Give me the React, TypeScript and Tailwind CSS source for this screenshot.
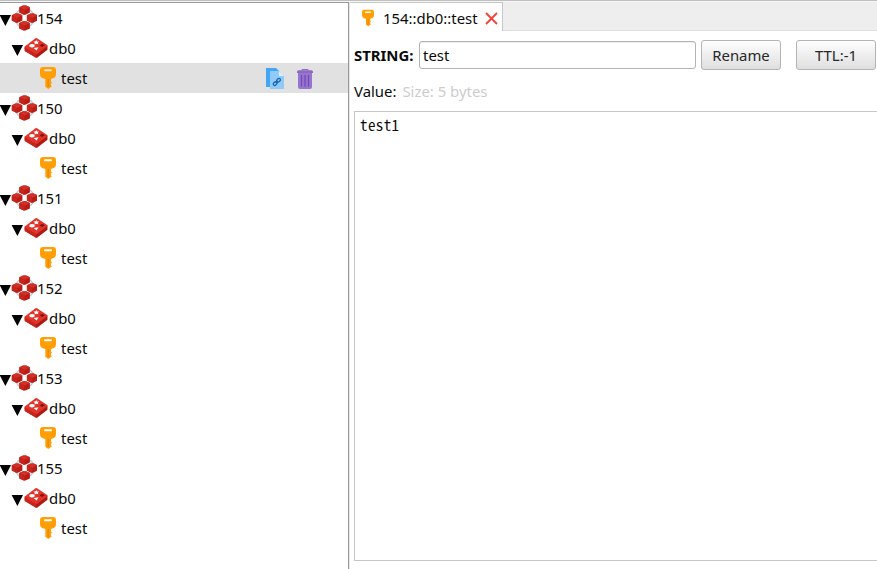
function Cube({ x, y }: { x: number; y: number }) {
  return (
    <g transform={`translate(${x} ${y})`}>
      <path d="M-1.5 -4.6H1.5L5.3 -2.8V2.5L.8 4.7H-.8L-5.3 2.5V-2.8Z" fill="#b81c14" />
      <path d="M-1.5 -4.6H1.5L5.3 -2.8L0 -.1L-5.3 -2.8Z" fill="#cf3027" />
      <path d="M-5.3 -2.8L0 -.1V4.7H-.8L-5.3 2.5Z" fill="#c6241c" />
    </g>
  );
}

function ClusterIcon() {
  return (
    <svg className="h-[26px] w-[26px] shrink-0" viewBox="0 0 26 26">
      <circle cx="13.6" cy="13" r="9.6" fill="none" stroke="#bcc6cc" strokeWidth="1.3" />
      <Cube x={13.6} y={5.1} />
      <Cube x={6.1} y={13} />
      <Cube x={21.2} y={13} />
      <Cube x={13.6} y={20.9} />
    </svg>
  );
}

function DatabaseIcon() {
  return (
    <svg className="h-[24px] w-[24px] shrink-0" viewBox="0 0 24 24">
      <path d="M.8 10.5Q.4 11.5 .8 15L12 21.8Q12.8 22 13.4 21.5L23.5 13.7V9.8Z" fill="#ad1a12" />
      <path d="M.8 10.6L11.5 2.2Q12.2 1.8 13 2.2L23.2 9.1Q23.9 9.6 23.2 10.2L13 18Q12.3 18.4 11.5 18L.8 11.6Q.2 11.1 .8 10.6Z" fill="#e0332a" />
      <path d="M.6 11.4L12.2 18.3V21.8L.8 15Z" fill="#c9251c" />
      <path d="M12.3 4L13.1 5.4L15.1 5.5L13.9 6.8L14.3 8.3L12.3 7.7L10.5 8.4L10.8 6.8L9.4 5.6L11.4 5.4Z" fill="#fff" />
      <ellipse cx="8" cy="9.7" rx="2.8" ry="1.7" fill="#fff" />
      <path d="M9.6 12L14.5 11.3L12.7 14.5Z" fill="#fff" />
      <path d="M15.6 9.5L18.2 7.7L20.8 9.2L18.2 11.1Z" fill="#7e1610" />
    </svg>
  );
}

function KeyIcon({ className }: { className: string }) {
  return (
    <svg className={className} viewBox="0 0 16 22">
      <path
        fillRule="evenodd"
        d="M3 0H13Q16 0 16 3V7Q16 10.8 12.3 11.5L11 12V14.5L12 15.5L11 16.7V18.4L12 19.2L8.3 22L5.3 19.7V12L3.7 11.5Q0 10.8 0 7V3Q0 0 3 0ZM5 2.3Q4 2.3 4 3.2Q4 4.2 5 4.2H11Q12 4.2 12 3.2Q12 2.3 11 2.3Z"
        fill="#ff9f05"
      />
      <path d="M8.2 12V20" stroke="#d98200" strokeWidth="1" />
    </svg>
  );
}

function CopyIcon() {
  return (
    <svg className="h-[22px] w-[18px]" viewBox="0 0 18 22">
      <path d="M0 0H10L14 4V19H0Z" fill="#42a5f5" />
      <path d="M4 3H13L18 8V21H4Z" fill="#90caf9" />
      <path d="M13 3L18 8H13Z" fill="#d9efff" />
      <g fill="none" stroke="#1764b0" strokeWidth="1.3">
        <ellipse cx="9.1" cy="15.6" rx="2.1" ry="1.5" transform="rotate(-40 9.1 15.6)" />
        <ellipse cx="12.6" cy="12.2" rx="2.1" ry="1.5" transform="rotate(-40 12.6 12.2)" />
        <path d="M9.8 15L12 12.9" />
      </g>
    </svg>
  );
}

function TrashIcon() {
  return (
    <svg className="h-[20px] w-[16px]" viewBox="0 0 16 20">
      <path d="M5 2V.5H11V2" fill="none" stroke="#8e6cc6" strokeWidth="1" />
      <path d="M1 4H15V18Q15 20 13 20H3Q1 20 1 18Z" fill="#9575cd" />
      <path d="M0 3Q0 1.3 1.7 1.3H14.3Q16 1.3 16 3V4H0Z" fill="#9068c4" />
      <path d="M4.5 6V17.5M8 6V17.5M11.5 6V17.5" stroke="#7446b8" strokeWidth="1.2" />
    </svg>
  );
}

function Arrow() {
  return (
    <svg className="mt-[4px] h-[11px] w-[12px] shrink-0" viewBox="0 0 12 11">
      <path d="M.6 0H12L6.4 11Z" fill="#000" />
    </svg>
  );
}

function Connection({ name, selected = false }: { name: string; selected?: boolean }) {
  return (
    <div>
      <div className="flex h-[30px] items-center">
        <div className="-ml-px flex"><Arrow /></div>
        <ClusterIcon />
        <span>{name}</span>
      </div>
      <div className="flex h-[30px] items-center pl-[11px]">
        <Arrow />
        <div className="ml-px mr-px"><DatabaseIcon /></div>
        <span>db0</span>
      </div>
      <div className={`flex h-[30px] items-center pl-[40px] ${selected ? "bg-[#e1e1e1]" : ""}`}>
        <KeyIcon className="h-[22px] w-[16px] shrink-0" />
        <span className="ml-[5px]">test</span>
        {selected && (
          <div className="ml-auto mr-[35px] flex items-center gap-[13px] pt-[2px]">
            <CopyIcon />
            <TrashIcon />
          </div>
        )}
      </div>
    </div>
  );
}

const button =
  "h-[30px] w-[80px] shrink-0 rounded-[3px] border border-[#b4b4b4] bg-linear-to-b from-[#fefefe] to-[#dfdfdf] text-[#26282a]";

export default function App() {
  return (
    <div className="flex h-[569px] w-[877px] flex-col overflow-hidden border-t border-[#c0bfc0] bg-white font-['Noto_Sans',sans-serif] text-[14.9px] leading-[20px] text-[#0a0a0a]">
      <div className="h-px shrink-0 bg-[#f6f6f6]" />
      <div className="flex min-h-0 flex-1">
        <aside className="w-[349px] shrink-0 border-r border-t border-[#999999]">
          <Connection name="154" selected />
          <Connection name="150" />
          <Connection name="151" />
          <Connection name="152" />
          <Connection name="153" />
          <Connection name="155" />
        </aside>
        <main className="flex min-w-0 flex-1 flex-col border-l border-[#e4e4e4]">
          <div className="flex h-[29px] shrink-0 bg-[#eeeeee]">
            <div className="flex w-[153px] shrink-0 items-center border-r border-t border-[#c6c6c6] bg-white pl-[12px] pt-px">
              <KeyIcon className="h-[18px] w-[12px]" />
              <span className="ml-[9px] w-[95px] whitespace-nowrap pt-px">154::db0::test</span>
              <svg className="ml-[7px] mt-px h-[13px] w-[13px]" viewBox="0 0 13 13">
                <path d="M1 1L12 12M12 1L1 12" stroke="#f44336" strokeWidth="1.8" />
              </svg>
            </div>
            <div className="flex-1 border-b border-[#dedede]" />
          </div>
          <div className="mt-[9px] flex h-[30px] shrink-0 items-center pl-[4px]">
            <b className="w-[65px] shrink-0 whitespace-nowrap">STRING:</b>
            <input
              className="h-[28px] w-[277px] shrink-0 rounded-[3px] border border-[#b4b4b4] bg-white px-[3px] shadow-[inset_0_1px_0_#ededed] outline-none"
              defaultValue="test"
            />
            <button className={`ml-[5px] ${button}`}>Rename</button>
            <button className={`ml-[15px] ${button}`}>TTL:-1</button>
          </div>
          <div className="mt-[11px] flex h-[20px] shrink-0 gap-[6px] pl-[4px]">
            <span>Value:</span>
            <span className="text-[#cccccc]">Size: 5 bytes</span>
          </div>
          <div className="mb-[8px] ml-[4px] mt-[10px] flex-1 border border-r-0 border-[#c6c6c6] pl-[5px] pt-[3px] font-['Noto_Sans_Mono_CJK_SC','Noto_Sans_Mono','DejaVu_Sans_Mono',monospace] text-[15px] tracking-[0.4px]">
            test1
          </div>
        </main>
      </div>
    </div>
  );
}
